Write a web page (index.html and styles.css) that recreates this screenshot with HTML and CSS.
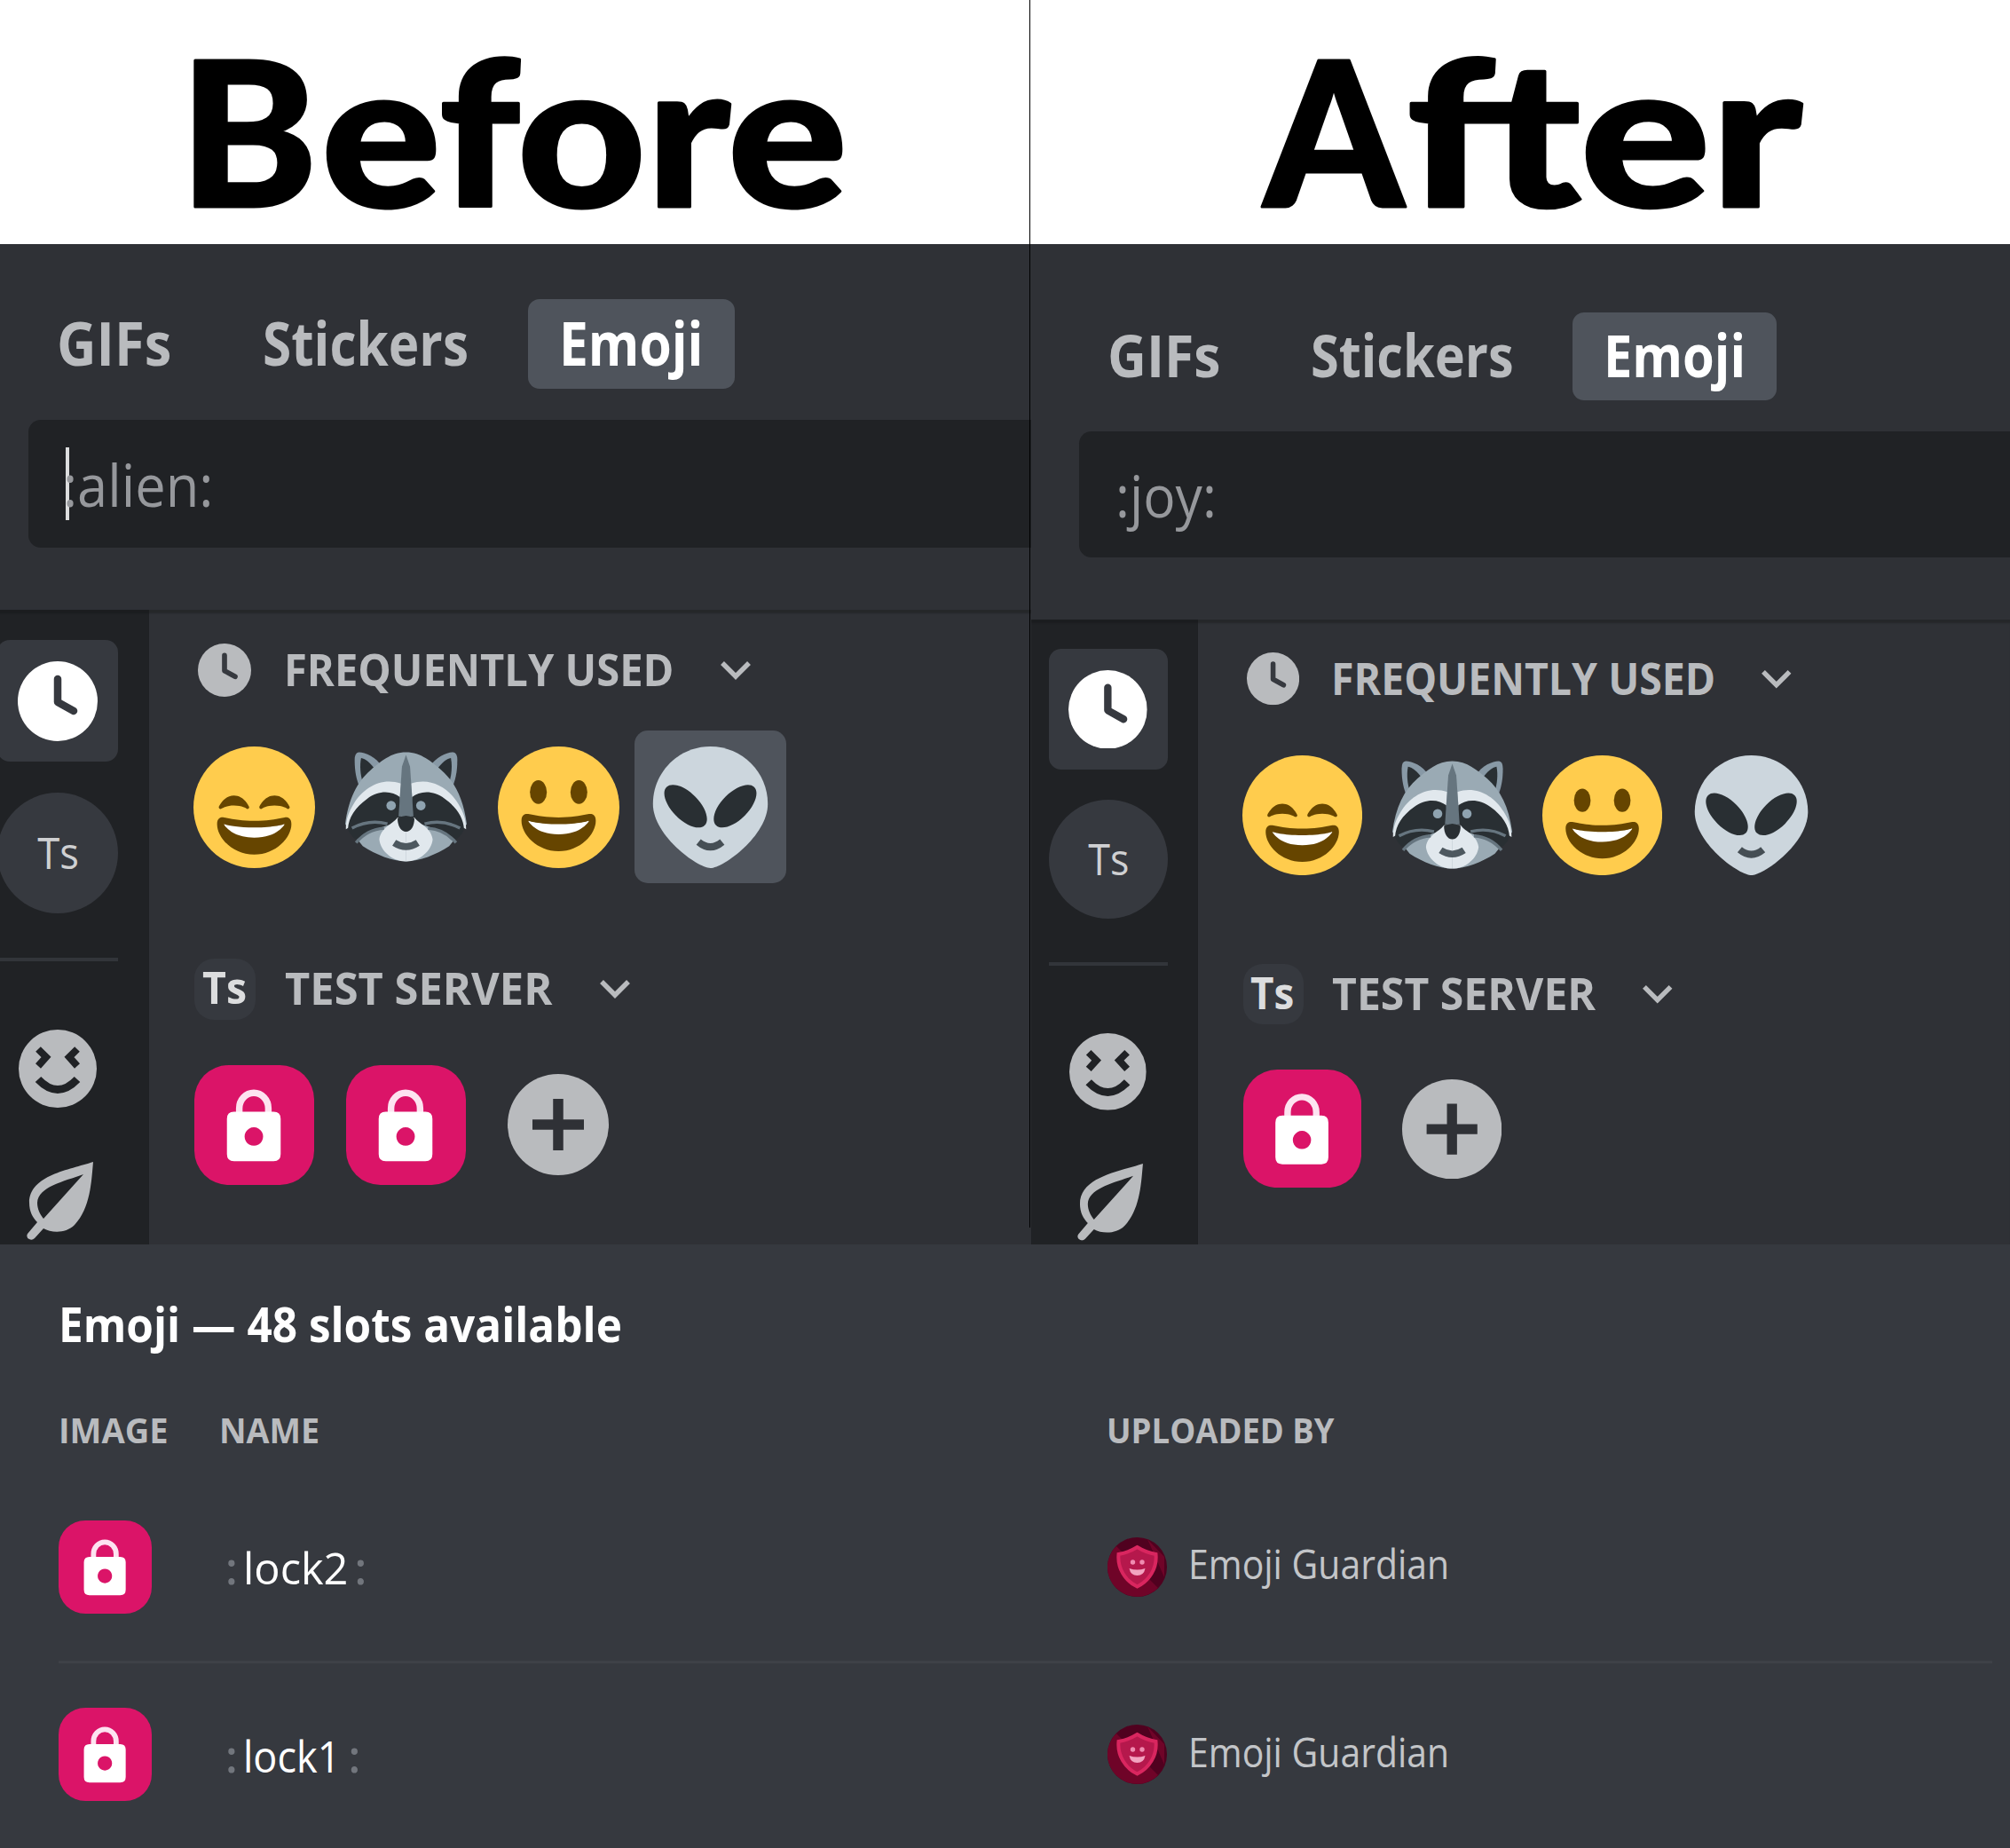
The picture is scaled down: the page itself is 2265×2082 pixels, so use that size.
FILE: index.html
```html
<!DOCTYPE html>
<html lang="en">
<head>
<meta charset="utf-8">
<title>Emoji picker: before and after</title>
<link rel="stylesheet" href="styles.css">
</head>
<body>
<svg class="sprite" aria-hidden="true">
  <symbol id="clock" viewBox="0 0 90 90">
    <circle cx="45" cy="45" r="45" fill="currentColor"/>
    <path class="hands" d="M45 20V46L63 56"/>
  </symbol>
  <symbol id="chevron" viewBox="0 0 36 24">
    <path d="M3 4L18 19L33 4" fill="none" stroke="currentColor" stroke-width="5.5"/>
  </symbol>
  <symbol id="people" viewBox="0 0 88 88">
    <circle cx="44" cy="44" r="44" fill="#b9bbbe"/>
    <path d="M22 22L31 31L22 41M66 22L57 31L66 41" fill="none" stroke="#202225" stroke-width="8"/>
    <path d="M22 56Q44 79 66 56" fill="none" stroke="#202225" stroke-width="9"/>
  </symbol>
  <symbol id="leaf" viewBox="0 0 76 88">
    <path fill="#b9bbbe" fill-rule="evenodd" d="M75 0C48 9 3 15 3 46C3 56 7 63 12 68L1 81Q-1 85 3 87Q6 89 9 86L19 75C28 80 44 81 54 71C72 52 73 22 75 0ZM64 14C42 22 13 28 12 46C12 53 15 59 19 64Z"/>
  </symbol>
  <symbol id="lock" viewBox="0 0 136 136">
    <rect width="136" height="136" rx="39" fill="#db1468"/>
    <path d="M51 58V49a16 17 0 0 1 33 0V58" fill="none" stroke="#fde3f0" stroke-width="7.5"/>
    <path fill="#fff" fill-rule="evenodd" d="M45 53H90Q98 53 98 61V101Q98 109 90 109H45Q37 109 37 101V61Q37 53 45 53ZM67.500 70.500a10.500 10.500 0 1 0 .1 0Z"/>
  </symbol>
  <symbol id="plus" viewBox="0 0 114 114">
    <circle cx="57" cy="57" r="57" fill="#b9bbbe"/>
    <path d="M57 28V86M28 57H86" stroke="#2f3136" stroke-width="11.500"/>
  </symbol>
  <symbol id="smile" viewBox="0 0 36 36">
    <circle cx="18" cy="18" r="18" fill="#ffcc4d"/>
    <path fill="#664500" d="M28.457 17.797c-.06-.135-1.499-3.297-4.457-3.297-2.957 0-4.397 3.162-4.457 3.297-.092.207-.032.449.145.591.175.142.426.147.61.014.012-.009 1.262-.902 3.702-.902 2.426 0 3.674.881 3.702.901.088.066.194.099.298.099.11 0 .221-.037.312-.109.177-.142.238-.386.145-.594zm-12 0c-.06-.135-1.499-3.297-4.457-3.297-2.957 0-4.397 3.162-4.457 3.297-.092.207-.032.449.144.591.176.142.427.147.61.014.013-.009 1.262-.902 3.703-.902 2.426 0 3.674.881 3.702.901.089.066.194.099.298.099.11 0 .221-.037.312-.109.178-.142.237-.386.145-.594zM18 22c-3.623 0-6.027-.422-9-1-.679-.131-2 0-2 2 0 4 4.595 9 11 9 6.404 0 11-5 11-9 0-2-1.321-2.132-2-2-2.973.578-5.377 1-9 1z"/>
    <path fill="#fff" d="M9 23s3 1 9 1 9-1 9-1-2 4-9 4-9-4-9-4z"/>
  </symbol>
  <symbol id="grin" viewBox="0 0 36 36">
    <circle cx="18" cy="18" r="18" fill="#ffcc4d"/>
    <ellipse cx="12" cy="13.500" rx="2.500" ry="3.500" fill="#664500"/>
    <ellipse cx="24" cy="13.500" rx="2.500" ry="3.500" fill="#664500"/>
    <path fill="#664500" d="M18 21c-3.623 0-6.027-.422-9-1-.679-.131-2 0-2 2 0 4 4.595 9 11 9 6.404 0 11-5 11-9 0-2-1.321-2.132-2-2-2.973.578-5.377 1-9 1z"/>
    <path fill="#fff" d="M9 22s3 1 9 1 9-1 9-1-2 4-9 4-9-4-9-4z"/>
  </symbol>
  <symbol id="alien" viewBox="0 0 36 36">
    <path fill="#ccd6dd" d="M35 17c0 9.389-13.223 19-17 19-3.778 0-17-9.611-17-19S8.611 0 18 0s17 7.611 17 17z"/>
    <path fill="#292f33" d="M13.503 14.845c3.124 3.124 4.39 6.923 2.828 8.485-1.562 1.562-5.361.297-8.485-2.828-3.124-3.124-4.391-6.923-2.828-8.485s5.361-.296 8.485 2.828zm8.994 0c-3.124 3.124-4.39 6.923-2.828 8.485 1.562 1.562 5.361.297 8.485-2.828 3.125-3.124 4.391-6.923 2.828-8.485-1.562-1.562-5.361-.297-8.485 2.828z"/>
    <path d="M14.500 28.300Q18 31.200 21.500 28.300" fill="none" stroke="#454e54" stroke-width="2.100"/>
  </symbol>
  <symbol id="raccoon" viewBox="0 0 36 36">
    <g id="raccoon-ear">
      <path fill="#8899a6" d="M25 6C27 3 30 1.700 32 1.700Q33.200 1.800 33.200 4C33.200 8 32.500 10 31.800 12Z"/>
      <path fill="#292f33" d="M27 7C28.500 4.800 30 3.600 31.300 3.400C31.800 6 31.400 8.500 30.900 10.400Z"/>
    </g>
    <use href="#raccoon-ear" transform="matrix(-1 0 0 1 36 0)"/>
    <path fill="#9aaab4" d="M18 1.700C22.500 1.700 25.500 4.500 28.500 7C32.500 10.500 35 15.500 36 23L30.800 29.500C27 32 22 34 18 34S9 32 5.200 29.500L0 23C1 15.500 3.500 10.500 7.500 7C10.500 4.500 13.500 1.700 18 1.700Z"/>
    <g id="raccoon-mask">
      <path fill="#e1e8ed" d="M19.500 11C25 9 30.500 12 33.500 17C35 19.500 35.800 21.500 35.800 24.500L30 21L20 17Z"/>
      <path fill="#292f33" d="M19.800 15C22 13.200 26 12.800 29.500 15.500C33 18 35 21 35.200 24.500C34.500 26 33.500 27.500 32.300 27.500L27 24.500L21 22.500L19.500 21Z"/>
      <path fill="#e1e8ed" d="M18 21H20.500C22 23 25.500 24 25.900 27.500C25.500 31 22 34 18 34Z"/>
      <circle cx="22.400" cy="17.500" r="1.400" fill="#8fa3b0"/>
      <path d="M23.500 22.900Q29 21.500 34 24.200M24.500 24.200Q29.500 24.500 32.800 28.500" fill="none" stroke="#66757f" stroke-width=".9"/>
    </g>
    <use href="#raccoon-mask" transform="matrix(-1 0 0 1 36 0)"/>
    <path fill="#66757f" d="M18 2.500L19.200 6L20.200 20.700H15.800L16.800 6Z"/>
    <path fill="#292f33" d="M15.500 21.200Q18 19.800 20.500 21.200C20.500 23.500 19.500 25.200 18 25.200S15.500 23.500 15.500 21.200Z"/>
    <path d="M14.500 28.500Q18 30.800 21.500 28.500" fill="none" stroke="#4d585f" stroke-width="2"/>
  </symbol>
  <symbol id="guardian" viewBox="0 0 67 67">
    <circle cx="33.500" cy="33.500" r="33.500" fill="#50011f"/>
    <path fill="#6f0428" d="M10 10L57 57A33.500 33.500 0 0 1 2 45A33 33 0 0 1 10 10ZM45 2L64 22V45Z"/>
    <path d="M33.500 11Q43 17 54.500 19C56 35 47 49 33.500 55.500C20 49 11 35 12.500 19Q24 17 33.500 11Z" fill="#b5184c" stroke="#d9265f" stroke-width="4"/>
    <circle cx="28.500" cy="28" r="2.700" fill="#f08bb0"/>
    <circle cx="39" cy="28" r="2.700" fill="#f08bb0"/>
    <path d="M24.500 35Q33.500 38 42.500 35Q41 43 33.500 43T24.500 35Z" fill="#f3a3c0"/>
  </symbol>
</svg>

<main class="board">
  <header class="titles">
    <h1 class="title"><svg viewBox="0 0 1161 275"><text y="233"><tspan x="202" textLength="156" lengthAdjust="spacingAndGlyphs">B</tspan><tspan x="362" textLength="593" lengthAdjust="spacingAndGlyphs">efore</tspan></text></svg></h1>
    <h1 class="title"><svg viewBox="0 0 1104 275"><text y="233"><tspan x="263" textLength="158" lengthAdjust="spacingAndGlyphs">A</tspan><tspan x="424" textLength="446" lengthAdjust="spacingAndGlyphs">fter</tspan></text></svg></h1>
  </header>

  <div class="panels">
    <section class="panel panel-before">
      <div class="picker">
        <nav class="tabs">
          <span class="tab tab-gifs"><span class="fit">GIFs</span></span>
          <span class="tab tab-stickers"><span class="fit">Stickers</span></span>
          <span class="tab tab-emoji active"><span class="fit">Emoji</span></span>
        </nav>
        <div class="search focused"><span class="fit">:alien:</span></div>
        <div class="picker-body">
          <aside class="rail">
            <div class="rail-tile"><svg class="rail-clock"><use href="#clock"/></svg></div>
            <div class="rail-server"><span class="fit">Ts</span></div>
            <div class="rail-line"></div>
            <svg class="rail-people"><use href="#people"/></svg>
            <svg class="rail-leaf"><use href="#leaf"/></svg>
          </aside>
          <div class="groups">
            <div class="group-head">
              <svg class="head-clock"><use href="#clock"/></svg>
              <span class="group-name frequent"><span class="fit">FREQUENTLY USED</span></span>
              <svg class="chevron"><use href="#chevron"/></svg>
            </div>
            <div class="emoji-row">
              <div class="cell"><svg><use href="#smile"/></svg></div>
              <div class="cell"><svg><use href="#raccoon"/></svg></div>
              <div class="cell"><svg><use href="#grin"/></svg></div>
              <div class="cell selected"><svg><use href="#alien"/></svg></div>
            </div>
            <div class="group-head server-head">
              <span class="server-badge"><span class="fit">Ts</span></span>
              <span class="group-name server"><span class="fit">TEST SERVER</span></span>
              <svg class="chevron"><use href="#chevron"/></svg>
            </div>
            <div class="emoji-row">
              <div class="cell lock"><svg><use href="#lock"/></svg></div>
              <div class="cell lock"><svg><use href="#lock"/></svg></div>
              <div class="cell add"><svg><use href="#plus"/></svg></div>
            </div>
          </div>
        </div>
      </div>
    </section>

    <section class="panel panel-after">
      <div class="picker">
        <nav class="tabs">
          <span class="tab tab-gifs"><span class="fit">GIFs</span></span>
          <span class="tab tab-stickers"><span class="fit">Stickers</span></span>
          <span class="tab tab-emoji active"><span class="fit">Emoji</span></span>
        </nav>
        <div class="search"><span class="fit">:joy:</span></div>
        <div class="picker-body">
          <aside class="rail">
            <div class="rail-tile"><svg class="rail-clock"><use href="#clock"/></svg></div>
            <div class="rail-server"><span class="fit">Ts</span></div>
            <div class="rail-line"></div>
            <svg class="rail-people"><use href="#people"/></svg>
            <svg class="rail-leaf"><use href="#leaf"/></svg>
          </aside>
          <div class="groups">
            <div class="group-head">
              <svg class="head-clock"><use href="#clock"/></svg>
              <span class="group-name frequent"><span class="fit">FREQUENTLY USED</span></span>
              <svg class="chevron"><use href="#chevron"/></svg>
            </div>
            <div class="emoji-row">
              <div class="cell"><svg><use href="#smile"/></svg></div>
              <div class="cell"><svg><use href="#raccoon"/></svg></div>
              <div class="cell"><svg><use href="#grin"/></svg></div>
              <div class="cell"><svg><use href="#alien"/></svg></div>
            </div>
            <div class="group-head server-head">
              <span class="server-badge"><span class="fit">Ts</span></span>
              <span class="group-name server"><span class="fit">TEST SERVER</span></span>
              <svg class="chevron"><use href="#chevron"/></svg>
            </div>
            <div class="emoji-row">
              <div class="cell lock"><svg><use href="#lock"/></svg></div>
              <div class="cell add"><svg><use href="#plus"/></svg></div>
            </div>
          </div>
        </div>
      </div>
    </section>
  </div>

  <section class="slots">
    <h2 class="slots-title"><span class="fit">Emoji — 48 slots available</span></h2>
    <div class="slots-head">
      <span class="col-image"><span class="fit">IMAGE</span></span>
      <span class="col-name"><span class="fit">NAME</span></span>
      <span class="col-uploader"><span class="fit">UPLOADED BY</span></span>
    </div>
    <div class="slot">
      <svg class="slot-image"><use href="#lock"/></svg>
      <div class="slot-name"><i>:</i><span class="fit name2">lock2</span><i>:</i></div>
      <div class="uploader"><svg><use href="#guardian"/></svg><span class="fit">Emoji Guardian</span></div>
    </div>
    <div class="slot">
      <svg class="slot-image"><use href="#lock"/></svg>
      <div class="slot-name"><i>:</i><span class="fit name1">lock1</span><i>:</i></div>
      <div class="uploader"><svg><use href="#guardian"/></svg><span class="fit">Emoji Guardian</span></div>
    </div>
  </section>
  <div class="divider"></div>
</main>
</body>
</html>
```
FILE: styles.css
```css
* { box-sizing: border-box; }

body {
  margin: 0;
  background: #36393f;
  font-family: "Open Sans", "Noto Sans", sans-serif;
  color: #b9bbbe;
}

svg { display: block; flex: none; }
.sprite { position: absolute; width: 0; height: 0; }

.board {
  position: relative;
  width: 2265px;
  height: 2082px;
  overflow: hidden;
}

/* Labels are condensed horizontally to a narrower humanist width */
.fit {
  display: inline-block;
  white-space: nowrap;
  transform: scaleX(var(--sx, .93));
  transform-origin: left center;
}

/* Titles */
.titles { display: flex; height: 275px; background: #fff; }
.title { margin: 0; }
.title:first-child { width: 1161px; }
.title:last-child { width: 1104px; }
.title svg { width: 100%; height: 275px; overflow: visible; }
.title text {
  font: 900 228px "Lato", sans-serif;
  fill: #000;
  stroke: #000;
  stroke-width: 3px;
  stroke-linejoin: round;
}

.divider {
  position: absolute;
  left: 1160px;
  top: 0;
  width: 1px;
  height: 1383px;
  background: #000;
}

/* Picker panels */
.panels { display: flex; height: 1127px; }
.panel { overflow: hidden; background: #2f3136; }
.panel-before { width: 1162px; }
.panel-after { width: 1103px; }
.panel-before .picker { margin-left: -24px; padding-top: 62px; }
.panel-after .picker { padding-top: 78px; zoom: .986; }

.tabs { display: flex; gap: 29px; height: 101px; padding-left: 52px; }
.tab {
  padding-left: 35px;
  border-radius: 13px;
  font-size: 68px;
  font-weight: 700;
  line-height: 97px;
}
.tab-gifs { width: 203px; --sx: .905; }
.tab-stickers { width: 306px; --sx: .86; }
.tab-emoji { width: 233px; --sx: .862; }
.panel-before .tab-gifs, .panel-before .tab-stickers { padding-left: 36px; }
.tab.active { background: #4f545c; color: #fff; }

.search {
  height: 144px;
  margin: 35px 0 70px 56px;
  padding-left: 39px;
  border-radius: 14px 0 0 14px;
  background: #202225;
  color: #96989c;
  font-size: 66px;
  line-height: 144px;
}
.panel-after .search { margin-left: 55px; margin-bottom: 71px; padding-left: 41px; line-height: 146px; }
.search.focused { position: relative; }
.search.focused::before {
  content: "";
  position: absolute;
  left: 42px;
  top: 31px;
  width: 4px;
  height: 82px;
  background: #dcddde;
}

.picker-body { display: flex; height: 760px; box-shadow: inset 0 5px 2px -1px #25272a; }

.rail {
  display: flex;
  flex-direction: column;
  width: 191px;
  padding: 34px 0 0 20px;
  background: #202225;
  box-shadow: inset 0 5px 2px -1px #1b1d1f;
}
.panel-before .rail { width: 192px; padding-left: 21px; }
.rail-tile, .rail-server {
  display: flex;
  align-items: center;
  justify-content: center;
  width: 136px;
  height: 137px;
  background: #36393f;
}
.rail-tile { border-radius: 14px; color: #fff; }
.rail-clock { width: 90px; height: 90px; }
.hands { fill: none; stroke: #36393f; stroke-width: 8.5; stroke-linecap: round; stroke-linejoin: round; }
.rail-server {
  height: 136px;
  margin-top: 35px;
  border-radius: 50%;
  color: #cfd0d2;
  font-size: 50px;
  font-weight: 500;
  line-height: 56px;
}
.rail-server .fit { --sx: .91; transform-origin: center; margin: -3px 0 0 2px; }
.rail-line { width: 136px; height: 4px; margin-top: 50px; background: #32353a; }
.rail-people { width: 88px; height: 88px; margin: 77px 0 0 24px; }
.rail-leaf { width: 76px; height: 88px; margin: 61px 0 0 33px; }

.groups { padding: 38px 0 0 33px; }
.group-head { display: flex; align-items: center; height: 60px; padding-left: 22px; }
.head-clock { width: 60px; height: 60px; }
.group-name { font-size: 50px; font-weight: 700; line-height: 56px; margin-top: -3px; }
.frequent { width: 491px; margin-left: 37px; --sx: .942; }
.server { width: 354px; margin-left: 33px; --sx: .977; }
.chevron { width: 36px; height: 24px; }
.server-head { height: 70px; margin-top: 84px; padding-left: 18px; }
.server-badge {
  width: 69px;
  height: 69px;
  padding-left: 9px;
  border-radius: 22px;
  background: #36393f;
  color: #dcddde;
  font-size: 50px;
  font-weight: 700;
  line-height: 64px;
}
.emoji-row { display: flex; margin-top: 38px; }
.server-head + .emoji-row { margin-top: 32px; }
.panel-after .emoji-row { margin-top: 40px; }
.panel-after .server-head { margin-top: 83px; }
.panel-after .server-head + .emoji-row { margin-top: 33px; }
.cell {
  display: flex;
  align-items: center;
  justify-content: center;
  width: 171.300px;
  height: 172px;
}
.cell svg { width: 137px; height: 137px; }
.cell.lock svg { width: 135px; height: 135px; }
.cell.add svg { width: 114px; height: 114px; }
.cell.selected { border-radius: 15px; background: #4f545c; }

/* Slots table */
.slots { height: 680px; padding: 63px 20px 0 66px; background: #36393f; }
.slots-title { margin: 0; color: #fff; font-size: 53px; font-weight: 700; line-height: 54px; --sx: .934; }
.slots-head {
  display: grid;
  grid-template-columns: 181px 1000px 1fr;
  margin-top: 67px;
  font-size: 39px;
  font-weight: 700;
  line-height: 50px;
}
.col-image { --sx: .976; }
.col-name { --sx: .965; }
.col-uploader { --sx: .936; }
.slot {
  display: grid;
  grid-template-columns: 188px 994px 1fr;
  align-items: center;
  height: 205px;
}
.slots-head + .slot { height: 215px; margin-top: 23px; border-bottom: 3px solid #3e4147; }
.slot-image { width: 105px; height: 105px; }
.slot-name { display: flex; padding-top: 2px; color: #fff; font-size: 50px; line-height: 60px; }
.slot-name i { width: 20px; color: #72767d; font-style: normal; font-weight: 600; }
.name2 { --sx: .975; margin-right: 4px; }
.name1 { --sx: .9; margin-right: -3px; }
.uploader { display: flex; align-items: center; gap: 24px; color: #c3c5c8; font-size: 46px; line-height: 60px; --sx: .89; }
.uploader .fit { margin-top: -8px; }
.uploader svg { width: 67px; height: 67px; }
```
